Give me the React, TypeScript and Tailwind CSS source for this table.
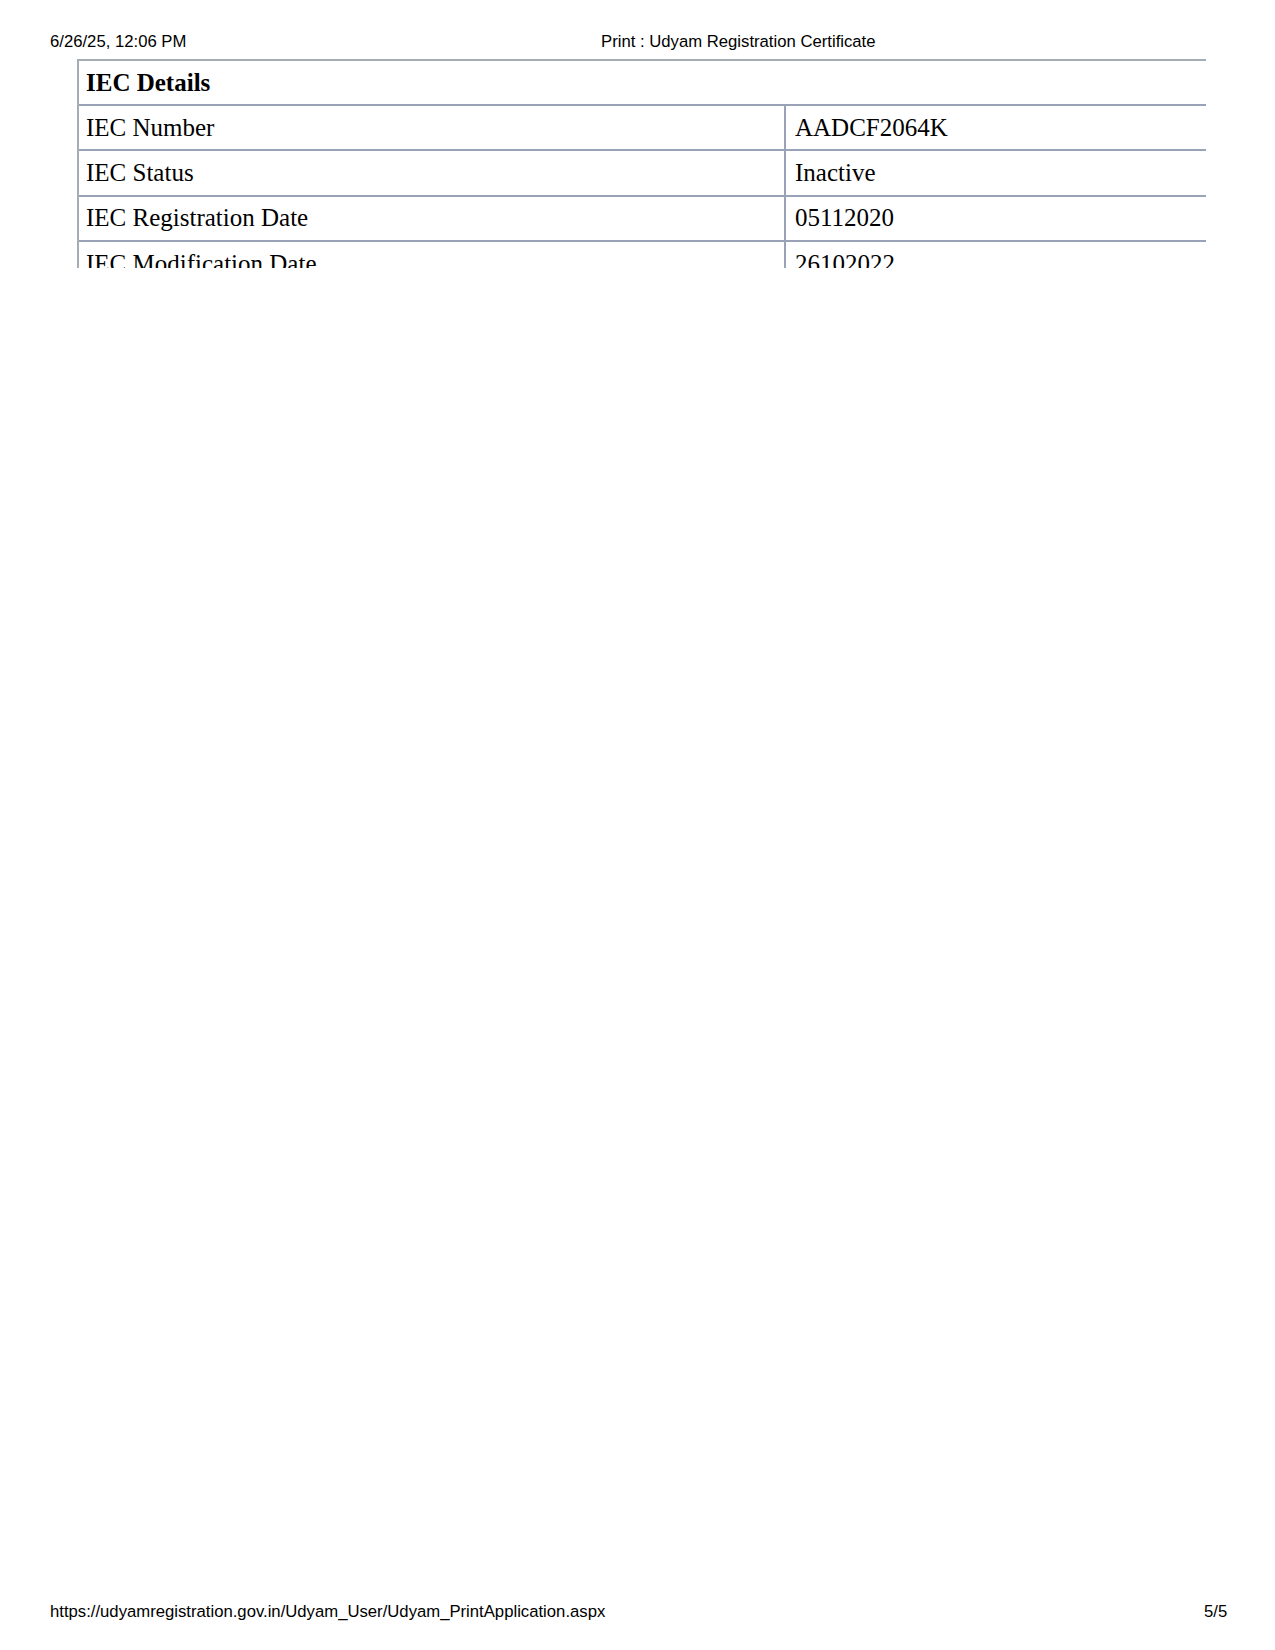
import React from "react";

const rows: [string, string][] = [
  ["IEC Number", "AADCF2064K"],
  ["IEC Status", "Inactive"],
  ["IEC Registration Date", "05112020"],
  ["IEC Modification Date", "26102022"],
];

export default function App() {
  return (
    <div className="w-[1275px] h-[1650px] bg-white flex flex-col text-black">
      <div
        className="flex items-center h-[20px] mt-[32px] text-[16.7px] leading-[20px]"
        style={{ fontFamily: '"Liberation Sans", Arial, sans-serif' }}
      >
        <span className="ml-[50px] w-[551px]">6/26/25, 12:06 PM</span>
        <span>Print : Udyam Registration Certificate</span>
      </div>
      <div
        className="ml-[77px] mt-[7px] w-[1129px] h-[209px] overflow-hidden border-t-2 border-l-2 border-[#a3adb3] text-[25px]"
        style={{ fontFamily: '"Liberation Serif", "Times New Roman", serif' }}
      >
        <div className="h-[45px] flex items-center pl-[7px] border-b-2 border-[#9aa2b8] font-bold">
          IEC Details
        </div>
        {rows.map(([k, v]) => (
          <div key={k} className="h-[45.3px] flex border-b-2 border-[#9aa2b8]">
            <div className="w-[707px] flex items-center pl-[7px] border-r-2 border-[#9aa2b8]">{k}</div>
            <div className="flex-1 flex items-center pl-[9px]">{v}</div>
          </div>
        ))}
      </div>
      <div className="flex-1" />
      <div
        className="flex items-center h-[20px] mb-[28px] text-[16.7px] leading-[20px]"
        style={{ fontFamily: '"Liberation Sans", Arial, sans-serif' }}
      >
        <span className="ml-[50px] w-[1154px]">https://udyamregistration.gov.in/Udyam_User/Udyam_PrintApplication.aspx</span>
        <span>5/5</span>
      </div>
    </div>
  );
}
